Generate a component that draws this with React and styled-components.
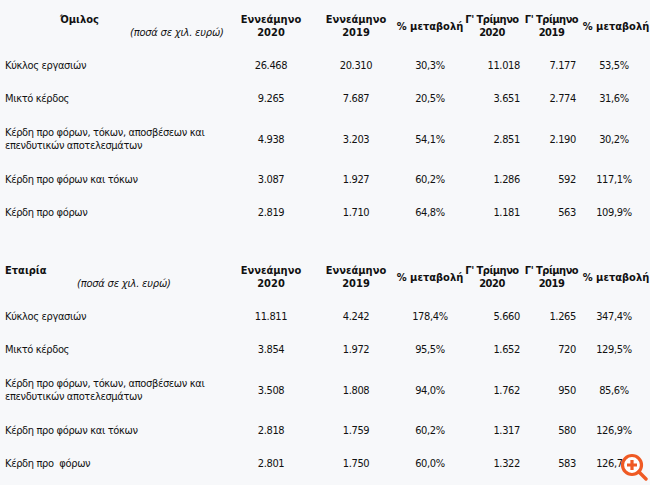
import React from "react";
import styled, { createGlobalStyle } from "styled-components";

const Global = createGlobalStyle`
  html, body { margin: 0; padding: 0; background: #f7f8fa; }
  body {
    font-family: Tahoma, "DejaVu Sans Condensed", "DejaVu Sans", sans-serif;
    font-size: 11px;
    color: #111;
  }
`;

const Page = styled.div`
  position: relative;
  width: 650px;
  height: 485px;
  overflow: hidden;
  padding-top: 3px;
  box-sizing: border-box;
`;

const Section = styled.div`
  display: flex;
  flex-direction: column;
  margin-top: ${(p) => (p.$gap ? "25px" : "0")};
`;

const Row = styled.div`
  display: grid;
  grid-template-columns: 237px 68px 102px 46px 69px 56px 72px;
  align-items: center;
  padding: ${(p) => (p.$pad ?? 10)}px 0;
  line-height: 13px;
`;

const Label = styled.div`
  padding-left: 5px;
  letter-spacing: -0.35px;
  white-space: nowrap;
`;

const HeadLabel = styled.div`
  display: flex;
  flex-direction: column;
  align-self: stretch;
  padding-left: 5px;
`;

const HeadTitle = styled.span`
  font-weight: bold;
  padding-left: ${(p) => p.$indent}px;
`;

const HeadNote = styled.span`
  font-style: italic;
  letter-spacing: -0.2px;
  padding-left: ${(p) => p.$indent}px;
`;

const Head = styled.div`
  font-weight: bold;
  white-space: nowrap;
  text-align: center;
  letter-spacing: ${(p) => (p.$squeeze ? "-0.5px" : "0")};
  padding-left: ${(p) => p.$pl || 0}px;
  padding-right: ${(p) => p.$pr || 0}px;
  display: flex;
  flex-direction: column;
  align-items: center;
`;

const Num = styled.div`
  white-space: nowrap;
  letter-spacing: -0.35px;
  text-align: ${(p) => p.$align || "center"};
  padding-right: ${(p) => (p.$align === "right" ? 2 : 0)}px;
`;

const Zoom = styled.svg`
  position: absolute;
  left: 618px;
  top: 450px;
  width: 31px;
  height: 31px;
`;

const sections = [
  {
    title: "Όμιλος",
    titleIndent: 55,
    noteIndent: 125,
    rows: [
      ["Κύκλος εργασιών", "26.468", "20.310", "30,3%", "11.018", "7.177", "53,5%"],
      ["Μικτό κέρδος", "9.265", "7.687", "20,5%", "3.651", "2.774", "31,6%"],
      [["Κέρδη προ φόρων, τόκων, αποσβέσεων και", "επενδυτικών αποτελεσμάτων"], "4.938", "3.203", "54,1%", "2.851", "2.190", "30,2%"],
      ["Κέρδη προ φόρων και τόκων", "3.087", "1.927", "60,2%", "1.286", "592", "117,1%"],
      ["Κέρδη προ φόρων", "2.819", "1.710", "64,8%", "1.181", "563", "109,9%"],
    ],
  },
  {
    title: "Εταιρία",
    titleIndent: 0,
    noteIndent: 72,
    rows: [
      ["Κύκλος εργασιών", "11.811", "4.242", "178,4%", "5.660", "1.265", "347,4%"],
      ["Μικτό κέρδος", "3.854", "1.972", "95,5%", "1.652", "720", "129,5%"],
      [["Κέρδη προ φόρων, τόκων, αποσβέσεων και", "επενδυτικών αποτελεσμάτων"], "3.508", "1.808", "94,0%", "1.762", "950", "85,6%"],
      ["Κέρδη προ φόρων και τόκων", "2.818", "1.759", "60,2%", "1.317", "580", "126,9%"],
      ["Κέρδη προ\u00a0 φόρων", "2.801", "1.750", "60,0%", "1.322", "583", "126,7%"],
    ],
  },
];

const aligns = ["center", "center", "center", "right", "right", "center"];

function Table({ s, gap }) {
  return (
    <Section $gap={gap}>
      <Row>
        <HeadLabel>
          <HeadTitle $indent={s.titleIndent}>{s.title}</HeadTitle>
          <HeadNote $indent={s.noteIndent}>(ποσά σε χιλ. ευρώ)</HeadNote>
        </HeadLabel>
        <Head><span>Εννεάμηνο</span><span>2020</span></Head>
        <Head><span>Εννεάμηνο</span><span>2019</span></Head>
        <Head>% μεταβολή</Head>
        <Head $pl={9} $squeeze><span>Γ' Τρίμηνο</span><span>2020</span></Head>
        <Head $pl={3} $squeeze><span>Γ' Τρίμηνο</span><span>2019</span></Head>
        <Head $pl={4}>% μεταβολή</Head>
      </Row>
      {s.rows.map((r, i) => {
        const multi = Array.isArray(r[0]);
        return (
          <Row key={i} $pad={multi ? 11 : 10}>
            <Label>
              {multi ? (
                <>
                  {r[0][0]}
                  <br />
                  {r[0][1]}
                </>
              ) : (
                r[0]
              )}
            </Label>
            {r.slice(1).map((v, j) => (
              <Num key={j} $align={aligns[j]}>{v}</Num>
            ))}
          </Row>
        );
      })}
    </Section>
  );
}

export default function App() {
  return (
    <>
      <Global />
      <Page>
        <Table s={sections[0]} />
        <Table s={sections[1]} gap />
        <Zoom viewBox="0 0 31 31">
          <circle cx="14" cy="15" r="9.5" fill="#ffffff" stroke="#ef5a24" strokeWidth="3.2" />
          <path d="M20.8 21.8 L28 29" stroke="#ef5a24" strokeWidth="3.4" strokeLinecap="round" />
          <path d="M14 10 V20 M9 15 H19" stroke="#ef5a24" strokeWidth="3.2" strokeLinecap="butt" />
        </Zoom>
      </Page>
    </>
  );
}
